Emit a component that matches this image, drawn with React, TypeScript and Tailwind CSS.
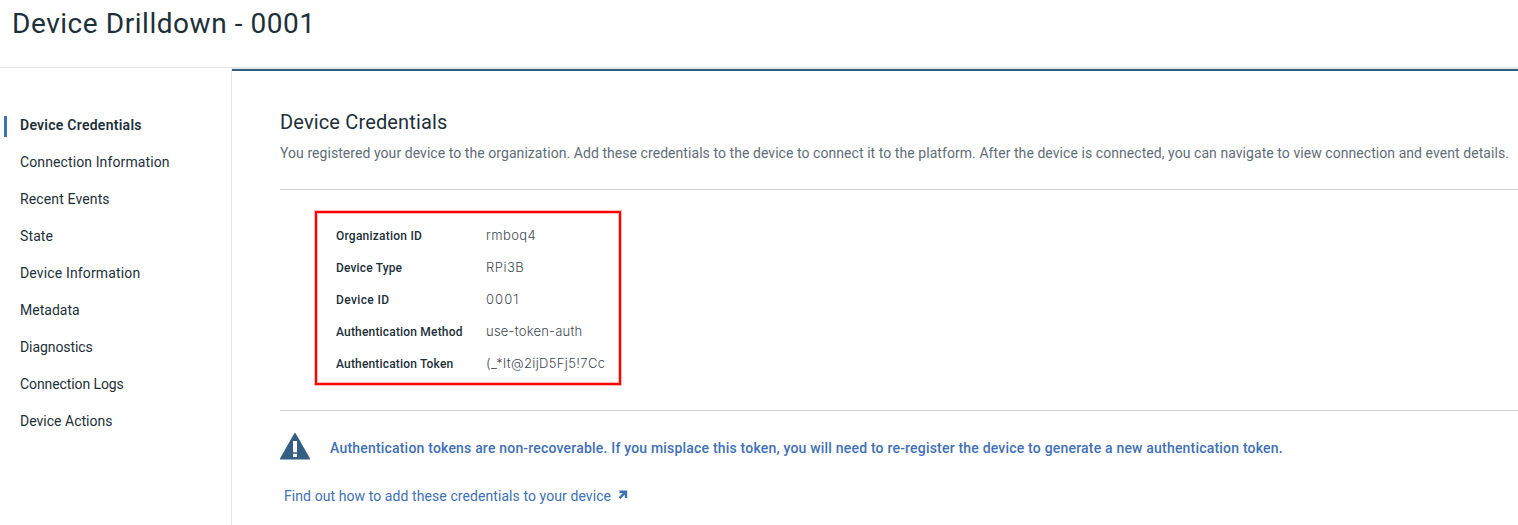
const navItems = [
  { label: "Device Credentials", tracking: "tracking-[0.26px]" },
  { label: "Connection Information", tracking: "tracking-[0.11px]" },
  { label: "Recent Events", tracking: "tracking-[0.13px]" },
  { label: "State", tracking: "tracking-[0.12px]" },
  { label: "Device Information", tracking: "tracking-[0.15px]" },
  { label: "Metadata", tracking: "tracking-[0.02px]" },
  { label: "Diagnostics", tracking: "tracking-[-0.08px]" },
  { label: "Connection Logs", tracking: "tracking-[-0.09px]" },
  { label: "Device Actions", tracking: "tracking-[0.01px]" },
];

const credentials = [
  { label: "Organization ID", lt: "tracking-[0.23px]", value: "rmboq4", vt: "tracking-[0.386px]" },
  { label: "Device Type", lt: "tracking-[0.15px]", value: "RPi3B", vt: "tracking-[0.5px]" },
  { label: "Device ID", lt: "tracking-[0.37px]", value: "0001", vt: "tracking-[1.05px]" },
  { label: "Authentication Method", lt: "tracking-[0.18px]", value: "use-token-auth", vt: "tracking-[0.233px]" },
  { label: "Authentication Token", lt: "tracking-[0.17px]", value: "(_*lt@2ijD5Fj5!7Cc", vt: "tracking-[0.36px]" },
];

function Sidebar() {
  return (
    <nav className="w-[232px] shrink-0 border-r border-[#e6e6e6] pt-[38px]">
      <ul>
        {navItems.map((item, i) => (
          <li key={item.label} className="flex h-[37px] items-center pl-1">
            <span className={i === 0 ? "mt-[3px] h-[21px] w-[3px] bg-[#4070b5]" : "h-[21px] w-[3px]"} />
            <a
              className={`pl-[13px] text-sm leading-5 whitespace-nowrap ${item.tracking} ${i === 0 ? "font-semibold" : ""}`}
            >
              {item.label}
            </a>
          </li>
        ))}
      </ul>
    </nav>
  );
}

function WarningIcon() {
  return (
    <svg width="30" height="27" viewBox="0 0 30 27" className="shrink-0">
      <path d="M14.2 0.6Q15-0.4 15.8 0.6L30 25.5V26.4H0V25.5Z" fill="#355f82" />
      <path d="M13 8h4v11.2h-4zM13 20.7h4v3.3h-4z" fill="#fff" />
    </svg>
  );
}

export default function App() {
  return (
    <div className="flex h-[525px] w-full flex-col overflow-hidden bg-white font-['Roboto',sans-serif] text-[#1d3039]">
      <header className="h-[68px] shrink-0 border-b border-[#e6e6e6] pl-3 pt-[5px]">
        <h1 className="text-[28px] leading-[38px] tracking-[0.55px]">Device Drilldown - 0001</h1>
      </header>
      <div className="flex min-h-0 flex-1">
        <Sidebar />
        <main className="flex min-w-0 flex-1 flex-col border-t border-[#e6e6e6]">
          <div className="h-[2px] shrink-0 bg-[#325c80]" />
          <div className="flex flex-col pl-12 pt-[37px]">
            <h2 className="text-xl leading-7 tracking-[0.15px]">Device Credentials</h2>
            <p className="mt-[7px] text-sm leading-5 tracking-[0.06px] whitespace-nowrap text-[#5f6d77]">
              You registered your device to the organization. Add these credentials to the device to connect it to the
              platform. After the device is connected, you can navigate to view connection and event details.
            </p>
            <div className="mt-[26px] h-[222px] border-y border-[#d8d8d8] pl-[35px] pt-[21px]">
              <dl className="h-[174px] w-[306px] border-2 border-[#ff0000] pl-[19px] pt-[7px] shadow-[0_0_0_1px_#ffbdbd,inset_0_0_0_1px_#ffbdbd]">
                {credentials.map((c) => (
                  <div key={c.label} className="flex h-8 items-center whitespace-nowrap">
                    <dt className={`w-[150px] text-xs font-medium ${c.lt}`}>{c.label}</dt>
                    <dd className={`font-['Inter',sans-serif] text-[13px] font-light text-[#3f4a52] ${c.vt}`}>{c.value}</dd>
                  </div>
                ))}
              </dl>
            </div>
            <div className="mt-[22px] flex h-[27px] items-center gap-5">
              <WarningIcon />
              <p className="mt-[3px] text-sm leading-5 font-medium tracking-[0.195px] whitespace-nowrap text-[#4070b5]">
                Authentication tokens are non-recoverable. If you misplace this token, you will need to re-register the
                device to generate a new authentication token.
              </p>
            </div>
            <a className="mt-[26px] flex items-center gap-[7px] pl-1 text-sm leading-5 tracking-[0.08px] text-[#4070b5]">
              Find out how to add these credentials to your device
              <svg width="10" height="10" viewBox="0 0 10 10" className="-mt-0.5">
                <path d="M1.5 1.7H8V8M8 1.7 1.5 8.2" fill="none" stroke="#4070b5" strokeWidth="2.4" />
              </svg>
            </a>
          </div>
        </main>
      </div>
    </div>
  );
}
